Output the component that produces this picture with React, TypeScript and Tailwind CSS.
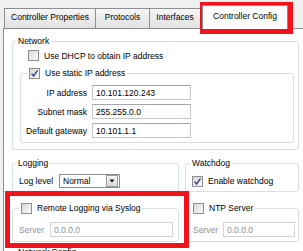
import type { ReactNode } from 'react';

function Check({ checked }: { checked?: boolean }) {
  return (
    <span className="w-[11px] h-[11px] shrink-0 border border-[#8f8f8f] bg-linear-to-br from-[#d6d6d6] to-[#fbfbfb] flex items-center justify-center">
      {checked && (
        <svg width="9" height="9" viewBox="0 0 9 9">
          <path d="M1.6 4.6 L3.6 7 L7.6 1.4" fill="none" stroke="#2e4a8e" strokeWidth="1.4" />
        </svg>
      )}
    </span>
  );
}

function TextBox({ value, disabled, className = '' }: { value: string; disabled?: boolean; className?: string }) {
  return (
    <div
      className={
        'h-[15px] flex items-center pl-[3px] bg-white border ' +
        (disabled
          ? 'border-[#d4d4d4] text-[#8f8f8f] '
          : 'border-[#c3c6cc] border-t-[#a3a6ad] text-black ') +
        className
      }
    >
      {value}
    </div>
  );
}

function Group({ legend, children, className = '', legendClass = 'ml-[3px]' }: { legend: ReactNode; children: ReactNode; className?: string; legendClass?: string }) {
  return (
    <fieldset className={'border border-[#d5dfe5] rounded-[3px] min-w-0 ' + className}>
      <legend className={'px-[2px] h-[12px] leading-[12px] ' + legendClass}>{legend}</legend>
      {children}
    </fieldset>
  );
}

function Tab({ label, w, selected }: { label: string; w: string; selected?: boolean }) {
  if (selected) {
    return (
      <div className={`relative z-10 -mb-px ml-[1px] h-[24px] pt-[4px] text-center bg-white border border-b-0 border-[#898c95] ${w}`}>
        {label}
      </div>
    );
  }
  return (
    <div className={`-ml-px first:ml-0 h-[20px] pt-[2px] text-center border border-b-0 border-[#8c8e94] bg-linear-to-b from-[#f6f6f6] to-[#e1e1e1] ${w}`}>
      {label}
    </div>
  );
}

export default function App() {
  return (
    <div className="relative w-[303px] h-[251px] overflow-hidden bg-[#f0f0f0] font-['Liberation_Sans',Arial,sans-serif] text-[8.5px] leading-[12px] text-black">
      <div className="flex items-end h-[28px] pl-[4px]">
        <Tab label="Controller Properties" w="w-[92px]" />
        <Tab label="Protocols" w="w-[55px]" />
        <Tab label="Interfaces" w="w-[52px]" />
        <Tab label="Controller Config" w="w-[86px]" selected />
      </div>

      <div className="ml-[3px] h-[223px] bg-white border-l border-t border-[#898c95] pl-[8px] pt-[6px]">
        <div className="w-[287px] flex flex-col">
          <Group legend="Network">
            <div className="pl-[7px] pr-[4px] pb-[6px]">
              <label className="ml-[8px] mt-[3px] h-[11px] flex items-center gap-[5px]">
                <Check />
                <span>Use DHCP to obtain IP address</span>
              </label>
              <Group
                className="mt-[6px]"
                legendClass="ml-[6px] flex items-center gap-[5px]"
                legend={
                  <>
                    <Check checked />
                    <span>Use static IP address</span>
                  </>
                }
              >
                <div className="grid grid-cols-[61px_99px] gap-x-[5px] gap-y-[4px] items-center pl-[5px] pt-[6px] pb-[4px]">
                  <span className="text-right">IP address</span>
                  <TextBox value="10.101.120.243" />
                  <span className="text-right">Subnet mask</span>
                  <TextBox value="255.255.0.0" />
                  <span className="text-right">Default gateway</span>
                  <TextBox value="10.101.1.1" />
                </div>
              </Group>
            </div>
          </Group>

          <div className="mt-[7px] grid grid-cols-[167px_114px] gap-x-[6px] gap-y-[10px]">
            <Group legend="Logging">
              <div className="flex items-center pl-[6px] pt-[5px] pb-[3px]">
                <span className="w-[40px]">Log level</span>
                <div className="flex items-center w-[61px] h-[14px] border border-[#8d8d8d] bg-white">
                  <span className="flex-1 pl-[3px]">Normal</span>
                  <span className="w-[12px] h-[12px] mr-px border border-[#9a9a9a] bg-linear-to-b from-[#f6f6f6] to-[#d6d6d6] flex items-center justify-center">
                    <svg width="6" height="4" viewBox="0 0 6 4">
                      <path d="M0.5 0.5 H5.5 L3 3.5 Z" fill="#111" />
                    </svg>
                  </span>
                </div>
              </div>
            </Group>

            <Group legend="Watchdog" legendClass="ml-[4px]">
              <label className="flex items-center gap-[5px] pl-[6px] pt-[6px] pb-[3px]">
                <Check checked />
                <span>Enable watchdog</span>
              </label>
            </Group>

            <Group
              legendClass="ml-[6px] flex items-center gap-[5px]"
              legend={
                <>
                  <Check />
                  <span>Remote Logging via Syslog</span>
                </>
              }
            >
              <div className="flex items-center pl-[6px] pr-[5px] pt-[8px] pb-[4px]">
                <span className="w-[31px] text-[#8f8f8f]">Server</span>
                <TextBox value="0.0.0.0" disabled className="flex-1" />
              </div>
            </Group>

            <Group
              legendClass="ml-[5px] flex items-center gap-[5px]"
              legend={
                <>
                  <Check />
                  <span>NTP Server</span>
                </>
              }
            >
              <div className="flex items-center pl-[7px] pr-[3px] pt-[8px] pb-[4px]">
                <span className="w-[30px] text-[#8f8f8f]">Server</span>
                <TextBox value="0.0.0.0" disabled className="flex-1" />
              </div>
            </Group>
          </div>

          <Group legend="Network Config" className="mt-[4px]">
            <div className="h-[20px]" />
          </Group>
        </div>
      </div>

      <div className="absolute left-[200px] top-[2px] w-[93px] h-[32px] border-[6px] border-[#f2121c]" />
      <div className="absolute left-[5px] top-[191px] w-[184px] h-[57px] border-[5px] border-[#f2121c]" />
    </div>
  );
}
